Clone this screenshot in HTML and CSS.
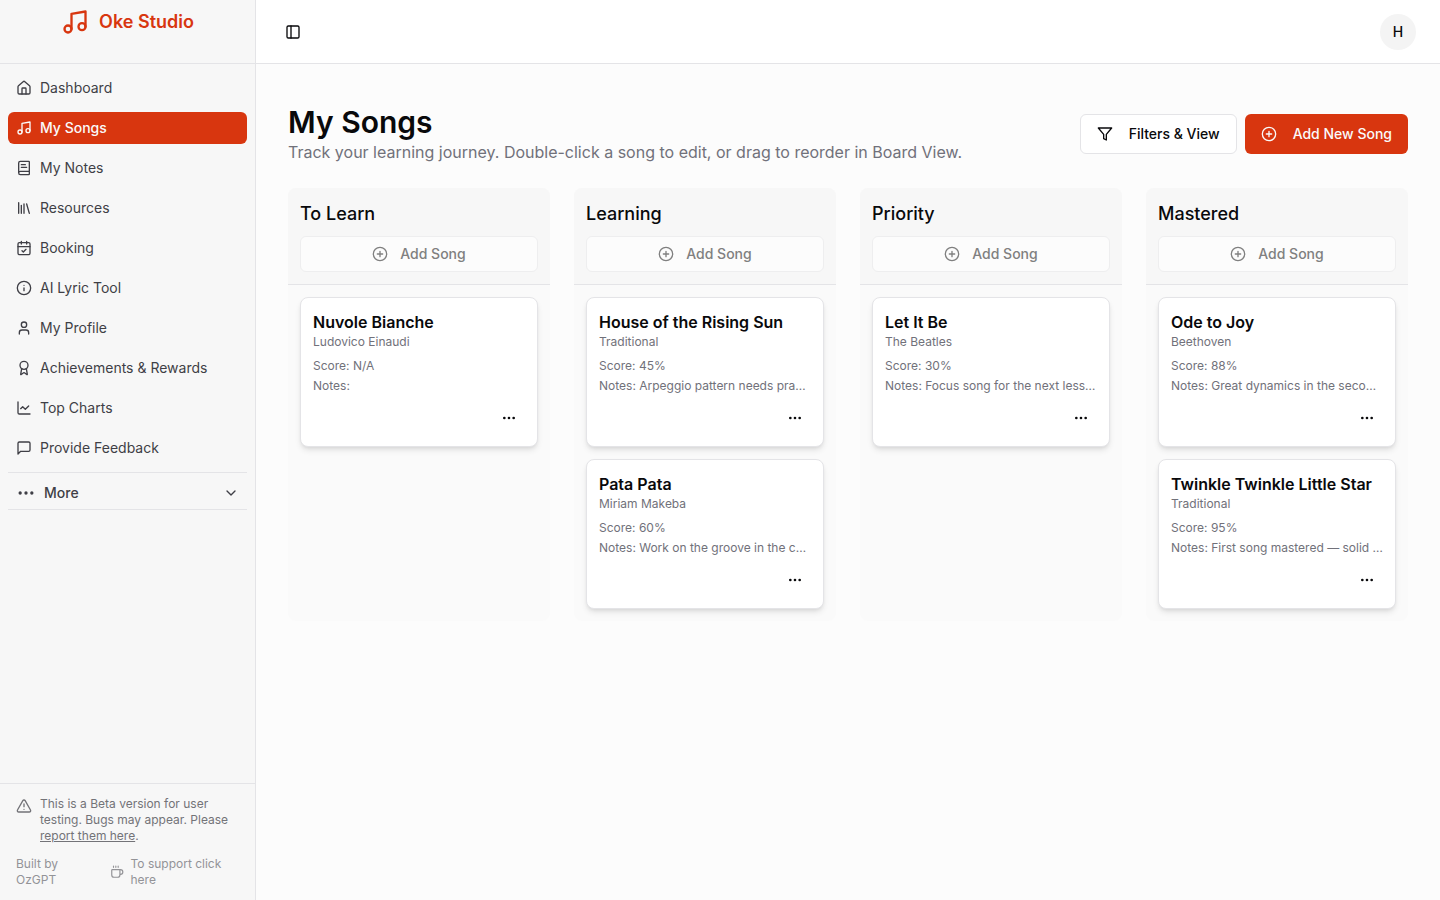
FILE: index.html
```html
<!DOCTYPE html>
<html lang="en">
<head>
<meta charset="utf-8">
<title>My Songs - Oke Studio</title>
<link rel="stylesheet" href="styles.css">
</head>
<body>
<svg class="sprite" aria-hidden="true">
  <symbol id="music" viewBox="0 0 24 24"><path d="M9 18V5l12-2v13"/><circle cx="6" cy="18" r="3"/><circle cx="18" cy="16" r="3"/></symbol>
  <symbol id="house" viewBox="0 0 24 24"><path d="M15 21v-8a1 1 0 0 0-1-1h-4a1 1 0 0 0-1 1v8"/><path d="M3 10a2 2 0 0 1 .709-1.528l7-5.999a2 2 0 0 1 2.582 0l7 5.999A2 2 0 0 1 21 10v9a2 2 0 0 1-2 2H5a2 2 0 0 1-2-2z"/></symbol>
  <symbol id="book" viewBox="0 0 24 24"><path d="M4 19.5v-15A2.5 2.5 0 0 1 6.5 2H19a1 1 0 0 1 1 1v18a1 1 0 0 1-1 1H6.500a1 1 0 0 1 0-5H20"/><path d="M8 11h8M8 7h6"/></symbol>
  <symbol id="library" viewBox="0 0 24 24"><path d="m16 6 4 14M12 6v14M8 8v12M4 4v16"/></symbol>
  <symbol id="calendar" viewBox="0 0 24 24"><path d="M8 2v4M16 2v4"/><rect width="18" height="18" x="3" y="4" rx="2"/><path d="M3 10h18M9 16l2 2 4-4"/></symbol>
  <symbol id="info" viewBox="0 0 24 24"><circle cx="12" cy="12" r="10"/><path d="M12 16v-4M12 8h.01"/></symbol>
  <symbol id="user" viewBox="0 0 24 24"><path d="M19 21v-2a4 4 0 0 0-4-4H9a4 4 0 0 0-4 4v2"/><circle cx="12" cy="7" r="4"/></symbol>
  <symbol id="award" viewBox="0 0 24 24"><path d="m15.477 12.890 1.515 8.526a.5.5 0 0 1-.81.47l-3.580-2.687a1 1 0 0 0-1.197 0l-3.586 2.686a.5.5 0 0 1-.81-.469l1.514-8.526"/><circle cx="12" cy="8" r="6"/></symbol>
  <symbol id="chart" viewBox="0 0 24 24"><path d="M3 3v16a2 2 0 0 0 2 2h16"/><path d="m19 9-5 5-4-4-3 3"/></symbol>
  <symbol id="message" viewBox="0 0 24 24"><path d="M21 15a2 2 0 0 1-2 2H7l-4 4V5a2 2 0 0 1 2-2h14a2 2 0 0 1 2 2z"/></symbol>
  <symbol id="dots" viewBox="0 0 24 24"><circle cx="12" cy="12" r="1"/><circle cx="19" cy="12" r="1"/><circle cx="5" cy="12" r="1"/></symbol>
  <symbol id="chevron" viewBox="0 0 24 24"><path d="m6 9 6 6 6-6"/></symbol>
  <symbol id="alert" viewBox="0 0 24 24"><path d="m21.730 18-8-14a2 2 0 0 0-3.480 0l-8 14A2 2 0 0 0 4 21h16a2 2 0 0 0 1.730-3"/><path d="M12 9v4M12 17h.01"/></symbol>
  <symbol id="coffee" viewBox="0 0 24 24"><path d="M10 2v2M14 2v2M6 2v2"/><path d="M16 8a1 1 0 0 1 1 1v8a4 4 0 0 1-4 4H7a4 4 0 0 1-4-4V9a1 1 0 0 1 1-1h14a4 4 0 1 1 0 8h-1"/></symbol>
  <symbol id="panel" viewBox="0 0 24 24"><rect width="18" height="18" x="3" y="3" rx="2"/><path d="M9 3v18"/></symbol>
  <symbol id="filter" viewBox="0 0 24 24"><path d="M22 3H2l8 9.460V19l4 2v-8.540z"/></symbol>
  <symbol id="plus" viewBox="0 0 24 24"><circle cx="12" cy="12" r="10"/><path d="M8 12h8M12 8v8"/></symbol>
</svg>
<div class="app">
  <aside class="sidebar">
    <div class="brand"><svg class="icon logo"><use href="#music"/></svg><span>Oke Studio</span></div>
    <nav class="nav">
      <a class="nav-item"><svg class="icon"><use href="#house"/></svg>Dashboard</a>
      <a class="nav-item active"><svg class="icon"><use href="#music"/></svg>My Songs</a>
      <a class="nav-item"><svg class="icon"><use href="#book"/></svg>My Notes</a>
      <a class="nav-item"><svg class="icon"><use href="#library"/></svg>Resources</a>
      <a class="nav-item"><svg class="icon"><use href="#calendar"/></svg>Booking</a>
      <a class="nav-item"><svg class="icon"><use href="#info"/></svg>AI Lyric Tool</a>
      <a class="nav-item"><svg class="icon"><use href="#user"/></svg>My Profile</a>
      <a class="nav-item"><svg class="icon"><use href="#award"/></svg>Achievements &amp; Rewards</a>
      <a class="nav-item"><svg class="icon"><use href="#chart"/></svg>Top Charts</a>
      <a class="nav-item"><svg class="icon"><use href="#message"/></svg>Provide Feedback</a>
      <div class="more"><svg class="icon more-dots"><use href="#dots"/></svg><span>More</span><svg class="icon chevron"><use href="#chevron"/></svg></div>
    </nav>
    <footer class="side-footer">
      <div class="beta"><svg class="icon"><use href="#alert"/></svg><p>This is a Beta version for user testing. Bugs may appear. Please <a class="link">report them here</a>.</p></div>
      <div class="credits"><span class="built">Built by OzGPT</span><a class="support"><svg class="icon cup"><use href="#coffee"/></svg><span>To support click here</span></a></div>
    </footer>
  </aside>
  <div class="main">
    <header class="topbar"><svg class="icon"><use href="#panel"/></svg><div class="avatar">H</div></header>
    <main class="content">
      <div class="page-head">
        <div><h1>My Songs</h1><p class="subtitle">Track your learning journey. Double-click a song to edit, or drag to reorder in Board View.</p></div>
        <div class="actions">
          <button class="btn outline"><svg class="icon"><use href="#filter"/></svg>Filters &amp; View</button>
          <button class="btn primary"><svg class="icon"><use href="#plus"/></svg>Add New Song</button>
        </div>
      </div>
      <div class="board">
        <section class="column">
          <div class="column-head"><h2>To Learn</h2><button class="add"><svg class="icon"><use href="#plus"/></svg>Add Song</button></div>
          <div class="cards">
            <article class="card"><h3>Nuvole Bianche</h3><p class="artist">Ludovico Einaudi</p><p class="score">Score: N/A</p><p class="notes">Notes:</p><div class="menu"><svg class="icon"><use href="#dots"/></svg></div></article>
          </div>
        </section>
        <section class="column">
          <div class="column-head"><h2>Learning</h2><button class="add"><svg class="icon"><use href="#plus"/></svg>Add Song</button></div>
          <div class="cards">
            <article class="card"><h3>House of the Rising Sun</h3><p class="artist">Traditional</p><p class="score">Score: 45%</p><p class="notes">Notes: Arpeggio pattern needs practice</p><div class="menu"><svg class="icon"><use href="#dots"/></svg></div></article>
            <article class="card"><h3>Pata Pata</h3><p class="artist">Miriam Makeba</p><p class="score">Score: 60%</p><p class="notes">Notes: Work on the groove in the chorus</p><div class="menu"><svg class="icon"><use href="#dots"/></svg></div></article>
          </div>
        </section>
        <section class="column">
          <div class="column-head"><h2>Priority</h2><button class="add"><svg class="icon"><use href="#plus"/></svg>Add Song</button></div>
          <div class="cards">
            <article class="card"><h3>Let It Be</h3><p class="artist">The Beatles</p><p class="score">Score: 30%</p><p class="notes">Notes: Focus song for the next lesson</p><div class="menu"><svg class="icon"><use href="#dots"/></svg></div></article>
          </div>
        </section>
        <section class="column">
          <div class="column-head"><h2>Mastered</h2><button class="add"><svg class="icon"><use href="#plus"/></svg>Add Song</button></div>
          <div class="cards">
            <article class="card"><h3>Ode to Joy</h3><p class="artist">Beethoven</p><p class="score">Score: 88%</p><p class="notes">Notes: Great dynamics in the second half</p><div class="menu"><svg class="icon"><use href="#dots"/></svg></div></article>
            <article class="card"><h3>Twinkle Twinkle Little Star</h3><p class="artist">Traditional</p><p class="score">Score: 95%</p><p class="notes">Notes: First song mastered — solid rhythm</p><div class="menu"><svg class="icon"><use href="#dots"/></svg></div></article>
          </div>
        </section>
      </div>
    </main>
  </div>
</div>
</body>
</html>
```
FILE: styles.css
```css
* { box-sizing: border-box; }
body { margin: 0; font: 400 14px/20px Inter, sans-serif; color: #09090b; background: #fcfcfc; }
h1, h2, h3, p { margin: 0; }
button { font: inherit; color: inherit; }
.sprite { display: none; }
.icon { width: 16px; height: 16px; flex: none; fill: none; stroke: currentColor; stroke-width: 2; stroke-linecap: round; stroke-linejoin: round; }
.app { display: flex; height: 900px; overflow: hidden; }
.sidebar { width: 256px; flex: none; display: flex; flex-direction: column; background: #f7f7f7; border-right: 1px solid #e4e4e7; color: #3f3f46; }
.brand { height: 64px; padding-top: 8px; display: flex; align-items: flex-start; justify-content: center; gap: 10px; border-bottom: 1px solid #e4e4e7; color: #d8360f; font-size: 18px; line-height: 28px; font-weight: 600; }
.logo { width: 28px; height: 28px; }
.nav { flex: 1; padding: 8px; display: flex; flex-direction: column; gap: 8px; }
.nav-item { height: 32px; padding: 0 8px; display: flex; align-items: center; gap: 8px; border-radius: 6px; }
.nav-item.active { background: #d8360f; color: #fafafa; font-weight: 500; }
.more { height: 38px; padding: 4px 8px 0; display: flex; align-items: center; border-top: 1px solid #e4e4e7; border-bottom: 1px solid #e4e4e7; font-weight: 500; }
.more span { flex: 1; }
.more-dots { width: 20px; height: 20px; margin-right: 8px; }
.side-footer { height: 117px; padding: 12px 16px; border-top: 1px solid #e4e4e7; font-size: 12px; line-height: 16px; color: #737378; }
.beta { display: flex; gap: 8px; }
.beta .icon { margin-top: 2px; }
.link { text-decoration: underline; }
.credits { margin-top: 12px; display: flex; justify-content: space-between; color: #939397; }
.built { width: 60px; }
.support { width: 129px; display: flex; align-items: center; gap: 6.5px; }
.cup { width: 14px; height: 14px; }
.main { flex: 1; min-width: 0; display: flex; flex-direction: column; }
.topbar { height: 64px; padding: 0 24px 0 29px; display: flex; align-items: center; justify-content: space-between; background: #fff; border-bottom: 1px solid #e4e4e7; }
.avatar { width: 36px; height: 36px; display: grid; place-items: center; border-radius: 50%; background: #f4f4f4; font-weight: 500; }
.content { padding: 40px 32px 0; }
.page-head { display: flex; align-items: center; justify-content: space-between; margin-bottom: 24px; }
h1 { font-size: 30px; line-height: 36px; font-weight: 600; }
.subtitle { font-size: 16px; line-height: 24px; color: #71717a; }
.actions { display: flex; gap: 8px; }
.btn { height: 40px; padding: 0 16px; display: flex; align-items: center; gap: 16px; border: 1px solid #e4e4e7; border-radius: 6px; background: #fff; font-weight: 500; white-space: nowrap; }
.btn.primary { border: 0; background: #d8360f; color: #fafafa; }
.board { display: grid; grid-template-columns: repeat(4, minmax(0, 1fr)); gap: 24px; }
.column { height: 433px; border-radius: 8px; overflow: hidden; background: #fafafa; }
.column-head { height: 97px; padding: 12px 12px 0; background: #f7f7f7; border-bottom: 1px solid #e4e4e7; }
h2 { font-size: 18px; line-height: 28px; font-weight: 500; }
.add { width: 100%; height: 36px; margin-top: 8px; display: flex; align-items: center; justify-content: center; gap: 12px; border: 1px solid #eeeeef; border-radius: 6px; background: #fcfcfc; color: #808080; font-weight: 500; }
.cards { padding: 12px; display: flex; flex-direction: column; gap: 12px; }
.card { height: 150px; padding: 12px; border: 1px solid #e4e4e7; border-radius: 8px; background: #fff; box-shadow: 0 4px 6px -1px rgba(0,0,0,.1), 0 2px 4px -2px rgba(0,0,0,.1); font-size: 12px; line-height: 16px; color: #71717a; }
h3 { padding-bottom: 1px; padding-top: 1px; font-size: 16px; line-height: 22px; font-weight: 600; color: #09090b; }
.score { margin-top: 8px; }
.notes { margin-top: 4px; overflow: hidden; text-overflow: ellipsis; white-space: nowrap; }
.menu { height: 32px; margin-top: 8px; padding-right: 8px; display: flex; align-items: center; justify-content: flex-end; color: #09090b; }
```
